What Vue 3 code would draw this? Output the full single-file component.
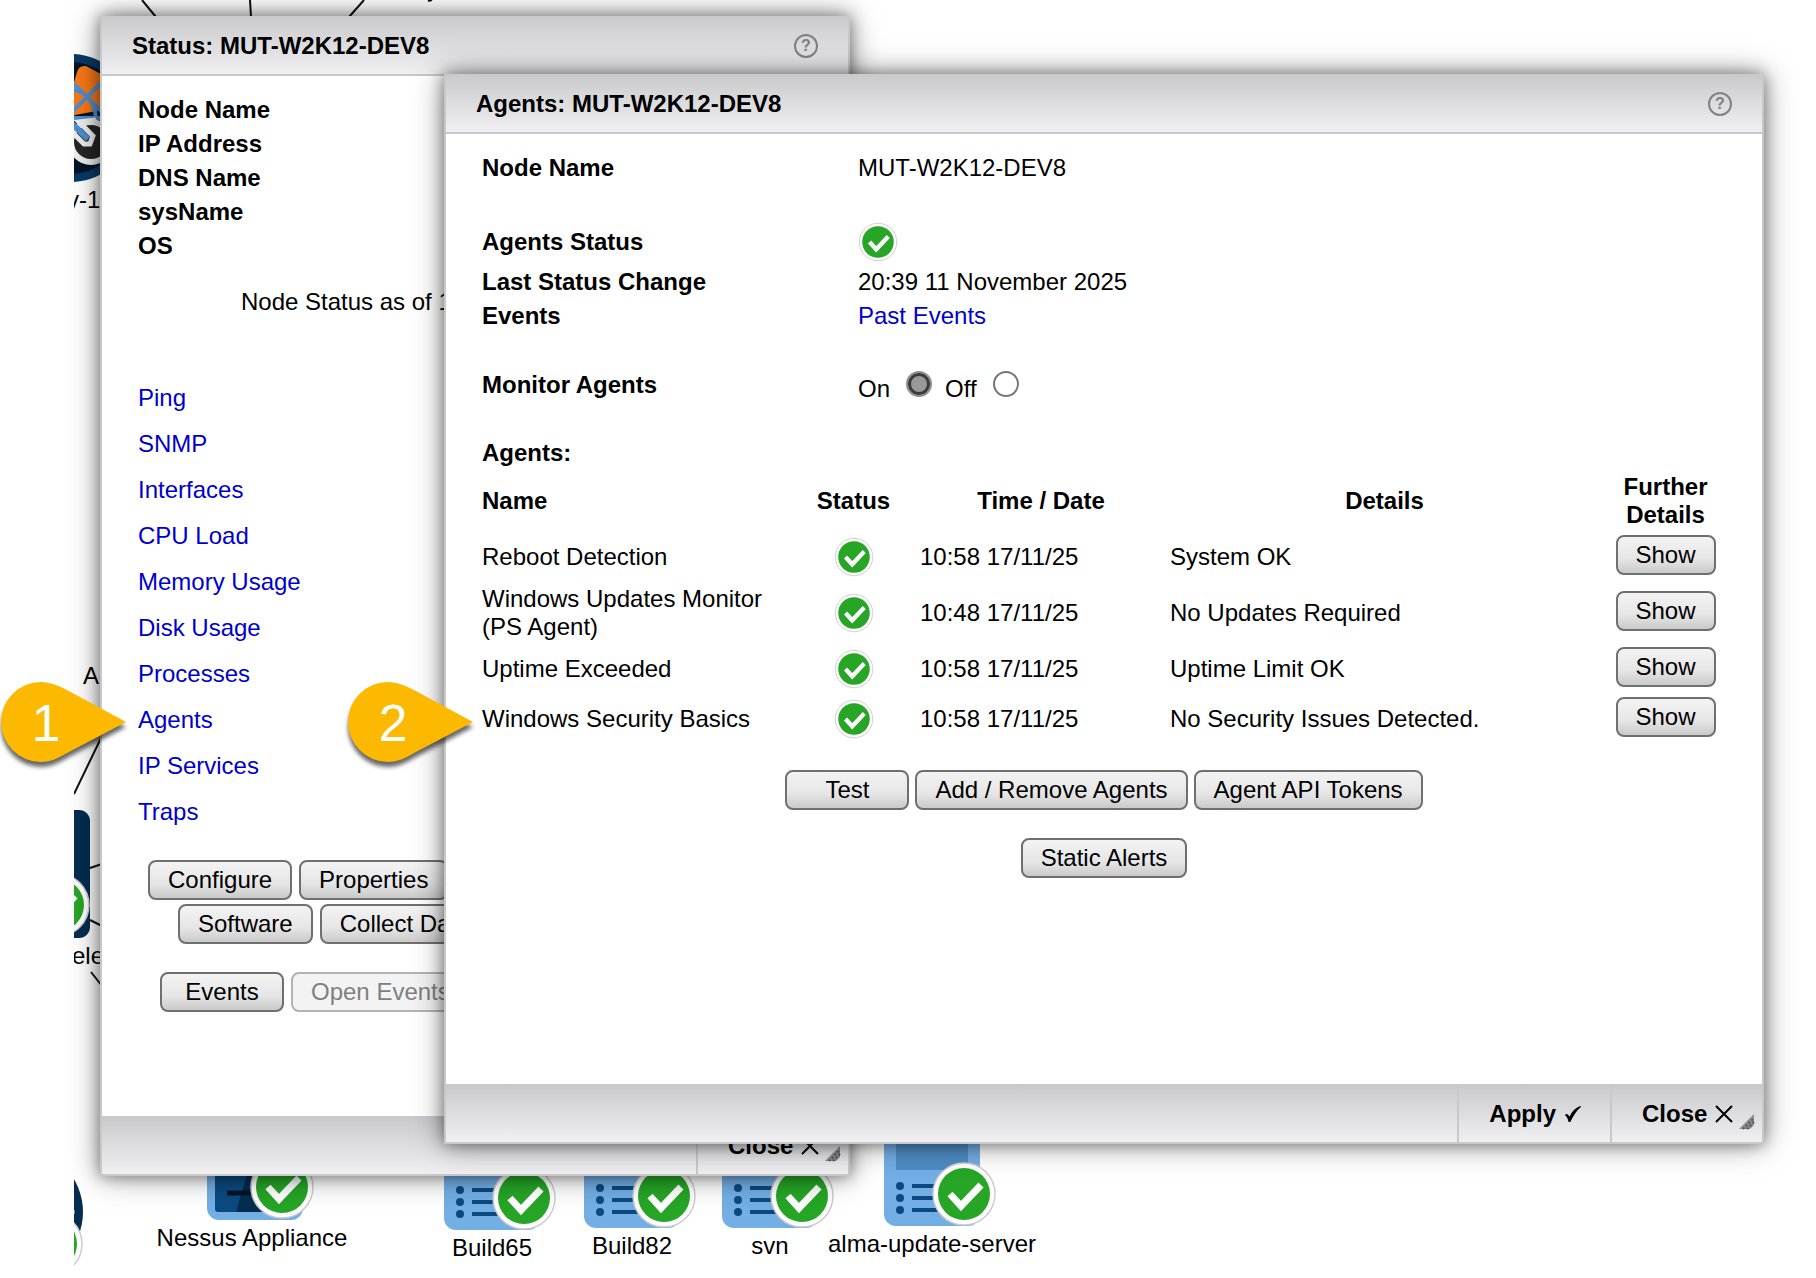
<script setup>
import { ref } from 'vue'

const monitor = ref('on')

const nodeFields = ['Node Name', 'IP Address', 'DNS Name', 'sysName', 'OS']

const monitors = [
  'Ping',
  'SNMP',
  'Interfaces',
  'CPU Load',
  'Memory Usage',
  'Disk Usage',
  'Processes',
  'Agents',
  'IP Services',
  'Traps',
]

const agents = [
  { name: 'Reboot Detection', time: '10:58 17/11/25', details: 'System OK' },
  { name: 'Windows Updates Monitor (PS Agent)', time: '10:48 17/11/25', details: 'No Updates Required', tall: true },
  { name: 'Uptime Exceeded', time: '10:58 17/11/25', details: 'Uptime Limit OK' },
  { name: 'Windows Security Basics', time: '10:58 17/11/25', details: 'No Security Issues Detected.' },
]

const servers = [
  { name: 'Build65', x: 444, y: 1102 },
  { name: 'Build82', x: 584, y: 1100 },
  { name: 'svn', x: 722, y: 1100 },
  { name: 'alma-update-server', x: 884, y: 1098 },
]

const callouts = [
  { label: '1', place: 'callout-first' },
  { label: '2', place: 'callout-second' },
]
</script>

<template>
  <main class="desktop">
    <svg class="map" aria-label="Network map">
      <defs>
        <g id="ok-badge">
          <circle r="31" fill="#fff" stroke="#ccc" stroke-width="1.5" />
          <circle r="26" fill="#26a526" />
          <path d="M-14 0 L-3 12 L17 -9" fill="none" stroke="#fff" stroke-width="7" />
        </g>
      </defs>

      <g stroke="#111" stroke-width="2">
        <path d="M142 0 L156 17 M250 0 L251 17 M364 0 L349 17 M428 1 L432 0" />
        <path d="M74 794 L102 736 M90 868 L102 864 M90 920 L102 926 M91 972 L102 986" />
      </g>

      <g>
        <circle cx="70" cy="118" r="60" fill="#021528" stroke="#083a66" stroke-width="8" />
        <path d="M64 117 L77 72 Q79 65 86 66 L112 80 L112 108 Z" fill="#f97817" />
        <g fill="none" stroke="#4d8fd0" stroke-width="4">
          <path d="M70 114 L106 78 M60 118 H110 M70 89 Q94 92 96 118 M74 84 L104 114" />
        </g>
        <circle cx="91" cy="142" r="20" fill="#262626" stroke="#eee" stroke-width="6" />
        <path d="M66 126 L84 144 L90 144 L93 136 L79 122 L96 120" fill="none" stroke="#eee" stroke-width="5" />
        <path d="M68 120 L88 139" stroke="#4d8fd0" stroke-width="6" />
        <text x="67" y="208">y-1.</text>
      </g>

      <text x="83" y="684">Ac</text>

      <rect x="-30" y="810" width="120" height="128" rx="11" fill="#042d50" />
      <use href="#ok-badge" x="58" y="905" />
      <text x="72" y="964">ele</text>

      <circle cx="19" cy="1212" r="64" fill="#042d50" />
      <path d="M60 1212 H75" stroke="#4d8fd0" stroke-width="4" />
      <use href="#ok-badge" x="51" y="1244" />

      <rect x="207" y="1120" width="96" height="100" rx="12" fill="#73aee4" />
      <rect x="215" y="1124" width="80" height="88" rx="3" fill="#0b4a81" />
      <path d="M250 1164 H295 V1212 H236 Z" fill="#042d50" />
      <path d="M227 1193 H270" stroke="#021528" stroke-width="5" />
      <use href="#ok-badge" x="282" y="1187" />
      <text x="252" y="1246" text-anchor="middle">Nessus Appliance</text>

      <g v-for="server in servers" :key="server.name" :transform="`translate(${server.x} ${server.y})`">
        <rect width="96" height="128" rx="12" fill="#73aee4" />
        <rect x="12" y="12" width="72" height="60" fill="#4f8dc7" />
        <g fill="#0b4a81">
          <circle cx="16" cy="88" r="4" />
          <circle cx="16" cy="100" r="4" />
          <circle cx="16" cy="112" r="4" />
          <path d="M28 86 h54 v4 h-54z M28 98 h54 v4 h-54z M28 110 h54 v4 h-54z" />
        </g>
        <use href="#ok-badge" x="80" y="96" />
        <text x="48" y="154" text-anchor="middle">{{ server.name }}</text>
      </g>
    </svg>

    <section class="window status-window" aria-labelledby="status-title">
      <header class="window-header">
        <h2 id="status-title">Status: MUT-W2K12-DEV8</h2>
        <button class="help" type="button" aria-label="Help">?</button>
      </header>

      <div class="status-body">
        <ul class="field-list">
          <li v-for="field in nodeFields" :key="field">{{ field }}</li>
        </ul>
        <p class="status-time">Node Status as of 1</p>
        <ul class="monitor-list">
          <li v-for="item in monitors" :key="item"><a href="#">{{ item }}</a></li>
        </ul>
        <div class="status-actions">
          <div class="row row-configure">
            <button class="push" type="button">Configure</button>
            <button class="push" type="button">Properties</button>
          </div>
          <div class="row row-software">
            <button class="push" type="button">Software</button>
            <button class="push" type="button">Collect Data</button>
          </div>
          <div class="row row-events">
            <button class="push wide" type="button">Events</button>
            <button class="push" type="button" disabled>Open Events</button>
          </div>
        </div>
      </div>

      <footer class="window-footer">
        <button class="foot" type="button">
          Close
          <svg width="18" height="18" viewBox="0 0 18 18"><path d="M1 1 L17 17 M17 1 L1 17" fill="none" stroke="currentColor" stroke-width="2" /></svg>
        </button>
        <svg class="grip" width="16" height="16" viewBox="0 0 16 16"><path d="M15 0 V11 L11 15 H0 Z" fill="#8a8a8a" /><path d="M4 15 L15 4 M8 15 L15 8" stroke="#555" stroke-width="2" stroke-dasharray="2 2" /></svg>
      </footer>
    </section>

    <section class="window agents-window" aria-labelledby="agents-title">
      <header class="window-header">
        <h2 id="agents-title">Agents: MUT-W2K12-DEV8</h2>
        <button class="help" type="button" aria-label="Help">?</button>
      </header>

      <div class="agents-body">
        <dl class="facts">
          <div class="fact">
            <dt>Node Name</dt>
            <dd>MUT-W2K12-DEV8</dd>
          </div>
          <div class="fact fact-status">
            <dt>Agents Status</dt>
            <dd><svg class="ok" viewBox="-33 -33 66 66" role="img" aria-label="OK"><use href="#ok-badge" /></svg></dd>
          </div>
          <div class="fact">
            <dt>Last Status Change</dt>
            <dd>20:39 11 November 2025</dd>
          </div>
          <div class="fact">
            <dt>Events</dt>
            <dd><a href="#">Past Events</a></dd>
          </div>
          <div class="fact fact-monitor">
            <dt>Monitor Agents</dt>
            <dd class="choices">
              <label for="monitor-on">On</label>
              <input id="monitor-on" v-model="monitor" type="radio" name="monitor" value="on" />
              <label for="monitor-off">Off</label>
              <input id="monitor-off" v-model="monitor" type="radio" name="monitor" value="off" />
            </dd>
          </div>
        </dl>

        <h3>Agents:</h3>
        <table>
          <colgroup>
            <col class="col-name" />
            <col class="col-status" />
            <col class="col-time" />
            <col />
            <col class="col-further" />
          </colgroup>
          <thead>
            <tr>
              <th class="left">Name</th>
              <th>Status</th>
              <th>Time / Date</th>
              <th>Details</th>
              <th>Further Details</th>
            </tr>
          </thead>
          <tbody>
            <tr v-for="agent in agents" :key="agent.name" :class="{ tall: agent.tall }">
              <td class="name">{{ agent.name }}</td>
              <td class="center"><svg class="ok" viewBox="-33 -33 66 66" role="img" aria-label="OK"><use href="#ok-badge" /></svg></td>
              <td>{{ agent.time }}</td>
              <td>{{ agent.details }}</td>
              <td class="center action"><button class="push show" type="button">Show</button></td>
            </tr>
          </tbody>
        </table>

        <div class="agent-actions">
          <button class="push wide" type="button">Test</button>
          <button class="push" type="button">Add / Remove Agents</button>
          <button class="push" type="button">Agent API Tokens</button>
        </div>
        <div class="agent-actions">
          <button class="push" type="button">Static Alerts</button>
        </div>
      </div>

      <footer class="window-footer">
        <button class="foot" type="button">
          Apply
          <svg width="18" height="18" viewBox="0 0 20 18"><path d="M1 10 Q4 7 6 12 Q10 3 18 0 L19 1 Q12 7 7 18 H5 Q4 12 1 10 Z" fill="currentColor" /></svg>
        </button>
        <button class="foot" type="button">
          Close
          <svg width="18" height="18" viewBox="0 0 18 18"><path d="M1 1 L17 17 M17 1 L1 17" fill="none" stroke="currentColor" stroke-width="2" /></svg>
        </button>
        <svg class="grip" width="16" height="16" viewBox="0 0 16 16"><path d="M15 0 V11 L11 15 H0 Z" fill="#8a8a8a" /><path d="M4 15 L15 4 M8 15 L15 8" stroke="#555" stroke-width="2" stroke-dasharray="2 2" /></svg>
      </footer>
    </section>

    <svg v-for="callout in callouts" :key="callout.label" class="callout" :class="callout.place" viewBox="0 0 126 80">
      <path d="M126 40 L67 71 C59 76 50 80 41 80 A40 40 0 0 1 41 0 C50 0 59 4 67 8 Z" fill="#fcb900" />
      <text x="46" y="59" text-anchor="middle">{{ callout.label }}</text>
    </svg>
  </main>
</template>

<style>
body {
  margin: 0;
  background: #fff;
}
</style>

<style scoped>
.desktop {
  position: relative;
  min-height: 100vh;
  overflow: hidden;
  font: 24px/34px "Liberation Sans", Arial, sans-serif;
  color: #000;
}

.map {
  position: absolute;
  inset: 0;
  width: 100%;
  height: 100%;
  clip-path: inset(0 0 0 74px);
}

h2,
h3,
p,
ul,
dl,
dd {
  margin: 0;
  padding: 0;
  font-size: 24px;
}

ul {
  list-style: none;
}

a {
  color: #0000cd;
  text-decoration: none;
}

button {
  font: inherit;
  color: inherit;
}

.window {
  position: absolute;
  border: 2px solid #c8c8c8;
  border-top: 0;
  background: #fff;
  box-shadow: 0 0 30px rgba(0, 0, 0, 0.4), 0 0 14px rgba(0, 0, 0, 0.4);
}

.status-window {
  top: 16px;
  left: 100px;
  width: 746px;
}

.agents-window {
  top: 74px;
  left: 444px;
  right: 52px;
}

.window-header {
  box-sizing: border-box;
  display: flex;
  align-items: center;
  justify-content: space-between;
  height: 60px;
  padding: 2px 30px 0;
  border-bottom: 2px solid #c8c8c8;
  background: linear-gradient(#c9c9cb, #f0f0f2);
}

.help {
  box-sizing: border-box;
  width: 24px;
  height: 24px;
  padding: 0;
  border: 2px solid #808080;
  border-radius: 50%;
  background: none;
  color: #808080;
  font-size: 16px;
  font-weight: bold;
  line-height: 20px;
}

.window-footer {
  position: relative;
  display: flex;
  justify-content: flex-end;
  height: 58px;
  background: linear-gradient(#c9c9cb, #f0f0f2);
}

.foot {
  display: flex;
  align-items: center;
  gap: 8px;
  min-width: 152px;
  padding: 2px 28px 0 30px;
  border: 0;
  border-left: 2px solid #c8c8c8;
  background: none;
  font-weight: bold;
}

.grip {
  position: absolute;
  right: 7px;
  bottom: 12px;
}

.status-body {
  padding: 17px 36px 104px;
}

.field-list {
  font-weight: bold;
}

.status-time {
  margin: 22px 0 56px 103px;
}

.monitor-list {
  line-height: 46px;
}

.status-actions {
  display: flex;
  flex-direction: column;
  gap: 4px;
  margin-top: 25px;
}

.row {
  display: flex;
  gap: 7px;
}

.row-configure {
  margin-left: 10px;
}

.row-software {
  margin-left: 40px;
}

.row-events {
  margin: 24px 0 0 22px;
}

.push {
  box-sizing: border-box;
  height: 40px;
  padding: 0 18px;
  border: 2px solid #6f6f6f;
  border-radius: 8px;
  background: linear-gradient(#f3f3f3, #e6e6e6 60%, #cacaca);
  line-height: 34px;
  white-space: nowrap;
}

.push:disabled {
  border-color: #b0b4b8;
  background: #f3f3f4;
  color: #808080;
}

.wide {
  min-width: 124px;
}

.show {
  width: 100px;
}

.agents-body {
  padding: 17px 34px 206px;
}

.fact {
  display: grid;
  grid-template-columns: 376px 1fr;
  align-items: center;
  padding-left: 2px;
}

dt {
  font-weight: bold;
}

.fact-status {
  min-height: 46px;
  margin-top: 34px;
}

.fact-monitor {
  margin: 30px 0;
}

.ok {
  display: inline-block;
  width: 40px;
  height: 40px;
  vertical-align: middle;
}

.choices {
  display: flex;
  align-items: baseline;
  padding-top: 8px;
}

input[type="radio"] {
  appearance: none;
  box-sizing: border-box;
  width: 26px;
  height: 26px;
  margin: 0 13px 0 16px;
  border: 2px solid #767676;
  border-radius: 50%;
  background: #fff;
}

input[type="radio"]:checked {
  border-color: #8e8e8e;
  background: #999;
  box-shadow: inset 0 0 0 3px #3b3b3b;
}

h3 {
  padding-left: 2px;
}

table {
  width: 100%;
  margin-top: 1px;
  table-layout: fixed;
  border-collapse: collapse;
  line-height: 28px;
}

.col-name {
  width: 311px;
}

.col-status,
.col-further {
  width: 125px;
}

.col-time {
  width: 250px;
}

th,
td {
  height: 50px;
  padding: 2px 4px 0;
  box-sizing: border-box;
  text-align: left;
  vertical-align: middle;
}

th {
  height: 60px;
  padding: 0 20px;
  text-align: center;
}

th.left {
  padding: 0 2px;
  text-align: left;
}

td.name {
  padding: 2px 2px 0;
}

.tall td {
  height: 62px;
}

td.center {
  padding: 2px 0 0;
  text-align: center;
}

td.action {
  padding: 0 0 2px;
}

.agent-actions {
  display: flex;
  justify-content: center;
  gap: 6px;
  margin: 27px 0 28px;
}

.agent-actions + .agent-actions {
  margin-bottom: 0;
}

.callout {
  position: absolute;
  top: 682px;
  width: 126px;
  height: 80px;
  overflow: visible;
  filter: drop-shadow(0 5px 2px rgba(0, 0, 0, 0.6));
}

.callout text {
  fill: #fff;
  font-size: 52px;
}

.callout-first {
  left: 0;
}

.callout-second {
  left: 347px;
}
</style>
